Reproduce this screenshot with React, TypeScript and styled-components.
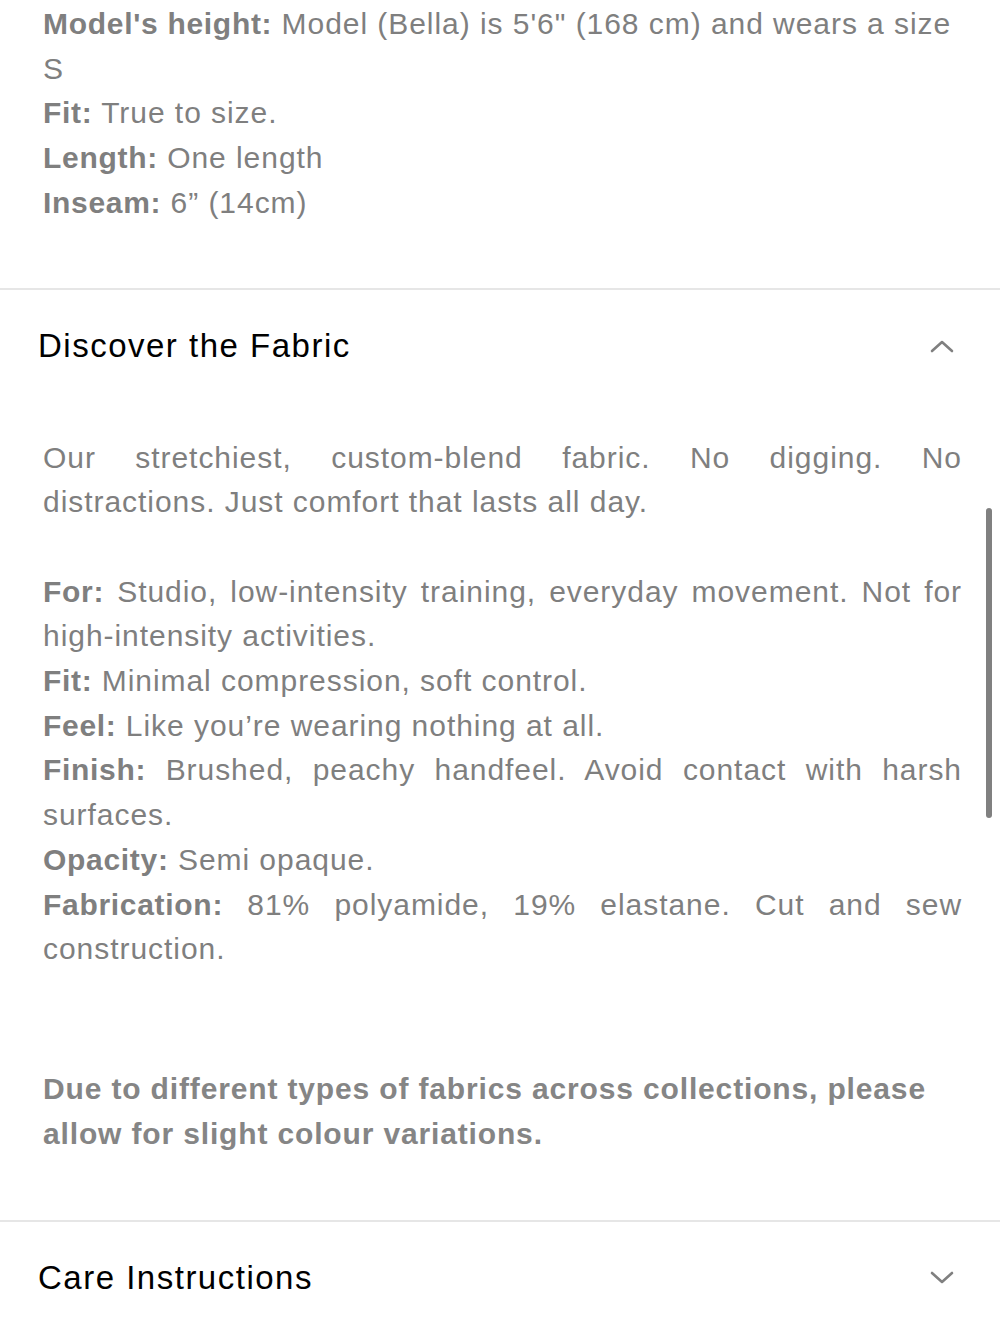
import React from 'react';
import styled, { createGlobalStyle } from 'styled-components';

const GlobalStyle = createGlobalStyle`
  html, body {
    margin: 0;
    padding: 0;
    background: #ffffff;
  }
  body {
    font-family: "Liberation Sans", Arial, Helvetica, sans-serif;
    -webkit-font-smoothing: antialiased;
  }
`;

const Page = styled.div`
  position: relative;
  width: 1000px;
  min-height: 1333px;
  overflow: hidden;
  background: #fff;
`;

const Details = styled.div`
  padding: 2px 38px 62px 43px;
`;

const Line = styled.p<{ $justify?: boolean }>`
  margin: 0;
  font-size: 30px;
  line-height: 44.7px;
  letter-spacing: 0.95px;
  color: #7f7f7f;
  text-align: ${props => (props.$justify ? 'justify' : 'left')};
`;

const Label = styled.strong`
  font-weight: 700;
  letter-spacing: 0.7px;
`;

const NoWrap = styled.span`
  white-space: nowrap;
`;

const Block = styled.div<{ $gap?: number }>`
  margin-top: ${props => props.$gap ?? 0}px;
`;

const Item = styled.section`
  border-top: 2px solid #e6e6e6;
`;

const Header = styled.div`
  display: flex;
  align-items: center;
  justify-content: space-between;
  height: 112px;
  padding: 0 46px 0 38px;
`;

const Title = styled.h2`
  margin: 0;
  font-size: 33px;
  font-weight: 400;
  color: #000;
  letter-spacing: 1.5px;
`;

const Body = styled.div`
  padding: 34px 38px 64px 43px;
`;

const Notice = styled.p`
  margin: 95px 0 0;
  font-size: 30px;
  line-height: 44.7px;
  letter-spacing: 0.85px;
  font-weight: 700;
  color: #858585;
`;

const Scrollbar = styled.div`
  position: absolute;
  right: 8px;
  top: 508px;
  width: 6px;
  height: 310px;
  border-radius: 3px;
  background: #808080;
`;

const Chevron = ({ up }: { up?: boolean }) => (
  <svg width="24" height="14" viewBox="0 0 24 14" fill="none">
    <path
      d={up ? 'M2 12 L12 3 L22 12' : 'M2 2 L12 11 L22 2'}
      stroke="#808080"
      strokeWidth="2.6"
      strokeLinecap="round"
      strokeLinejoin="round"
    />
  </svg>
);

export default function App() {
  return (
    <Page>
      <GlobalStyle />
      <Details>
        <Line>
          <Label>Model's height:</Label> Model (Bella) is 5'6" (168 cm) and wears a size S
        </Line>
        <Line>
          <Label>Fit:</Label> True to size.
        </Line>
        <Line>
          <Label>Length:</Label> One length
        </Line>
        <Line>
          <Label>Inseam:</Label> 6” (14cm)
        </Line>
      </Details>

      <Item>
        <Header>
          <Title>Discover the Fabric</Title>
          <Chevron up />
        </Header>
        <Body>
          <Line $justify>
            Our stretchiest, <NoWrap>custom-blend</NoWrap> fabric. No digging. No distractions. Just comfort that lasts all day.
          </Line>
          <Block $gap={44.7}>
            <Line $justify>
              <Label>For:</Label> Studio, <NoWrap>low-intensity</NoWrap> training, everyday movement. Not for{' '}
              <NoWrap>high-intensity</NoWrap> activities.
            </Line>
            <Line $justify>
              <Label>Fit:</Label> Minimal compression, soft control.
            </Line>
            <Line $justify>
              <Label>Feel:</Label> Like you’re wearing nothing at all.
            </Line>
            <Line $justify>
              <Label>Finish:</Label> Brushed, peachy handfeel. Avoid contact with harsh surfaces.
            </Line>
            <Line $justify>
              <Label>Opacity:</Label> Semi opaque.
            </Line>
            <Line $justify>
              <Label>Fabrication:</Label> 81% polyamide, 19% elastane. Cut and sew construction.
            </Line>
          </Block>
          <Notice>
            Due to different types of fabrics across collections, please allow for slight colour variations.
          </Notice>
        </Body>
      </Item>

      <Item>
        <Header>
          <Title>Care Instructions</Title>
          <Chevron />
        </Header>
      </Item>

      <Scrollbar />
    </Page>
  );
}
